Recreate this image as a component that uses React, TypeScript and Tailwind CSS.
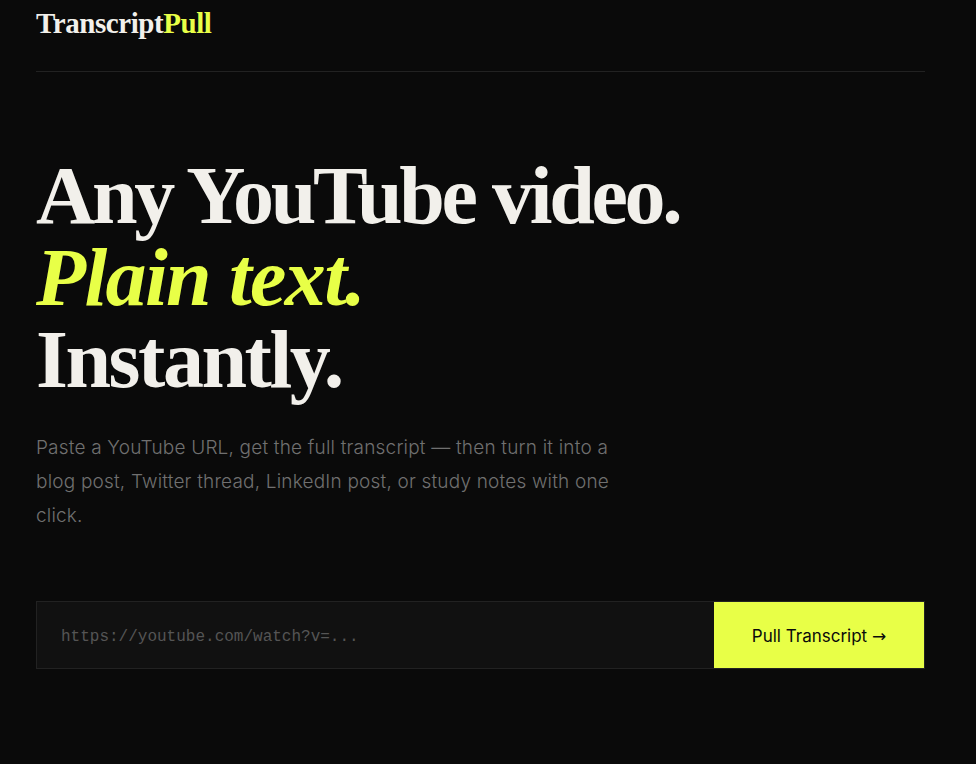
export default function App() {
  return (
    <div className="min-h-[764px] bg-[#0a0a0a] text-[#f2f0eb]">
      <div className="w-[889px] ml-9">
        <header className="h-[72px] pt-[2px] border-b border-[#222]">
          <div className="text-[29px] font-bold tracking-[-0.015em] font-['Liberation_Serif',serif]">
            Transcript<span className="text-[#e8ff47]">Pull</span>
          </div>
        </header>

        <main>
          <h1 className="mt-[83px] text-[82px] leading-[82px] font-bold tracking-[-0.04em] font-['Liberation_Serif',serif]">
            <div>Any YouTube video.</div>
            <div className="italic tracking-[-0.02em] text-[#e8ff47]">Plain text.</div>
            <div className="tracking-[-0.03em]">Instantly.</div>
          </h1>

          <p className="mt-[30px] w-[600px] text-[19px] leading-[34px] font-light tracking-[0.01em] text-[#707070] font-['Inter',sans-serif]">
            Paste a YouTube URL, get the full transcript — then turn it into a
            blog post, Twitter thread, LinkedIn post, or study notes with one
            click.
          </p>

          <div className="mt-[68px] flex h-[68px] border border-[#222] bg-[#111]">
            <input
              className="flex-1 bg-transparent px-6 pt-[3px] text-[16px] text-[#ccc] placeholder:text-[#555] outline-none font-['Liberation_Mono',monospace]"
              placeholder="https://youtube.com/watch?v=..."
            />
            <button className="w-[210px] pt-[3px] bg-[#e8ff47] text-[#0a0a0a] text-[17px] font-['Inter',sans-serif]">
              Pull Transcript <span className="font-['DejaVu_Sans',sans-serif]">→</span>
            </button>
          </div>
        </main>
      </div>
    </div>
  );
}
